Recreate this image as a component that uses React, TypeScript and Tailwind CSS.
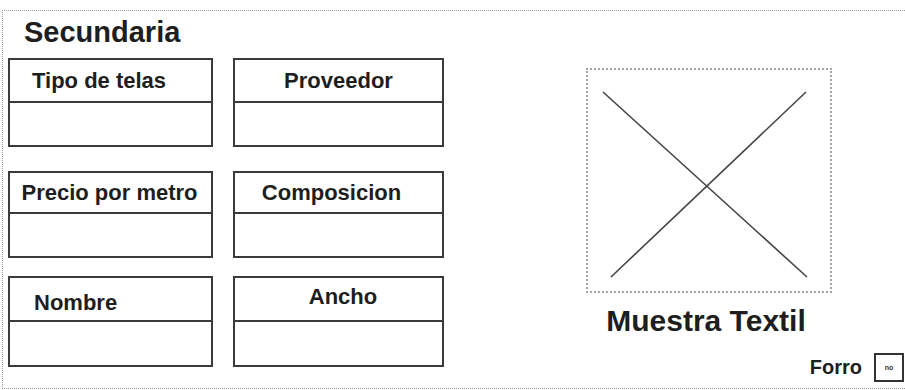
import React from "react";

type Field = {
  label: string;
  align: string;
};

// header heights differ slightly per row in the mockup
const rows: { top: string; header: string; height: string; fields: Field[] }[] = [
  {
    top: "mt-[9px]",
    header: "h-[43px]",
    height: "h-[89px]",
    fields: [
      { label: "Tipo de telas", align: "justify-start pl-[22px]" },
      { label: "Proveedor", align: "justify-center" },
    ],
  },
  {
    top: "mt-[24px]",
    header: "h-[41px]",
    height: "h-[87px]",
    fields: [
      { label: "Precio por metro", align: "justify-center pr-[2px]" },
      { label: "Composicion", align: "justify-center pr-[14px]" },
    ],
  },
  {
    top: "mt-[18px]",
    header: "h-[44px]",
    height: "h-[91px]",
    fields: [
      { label: "Nombre", align: "justify-start pl-[24px] pt-[6px]" },
      { label: "Ancho", align: "justify-center pl-[9px] pb-[6px]" },
    ],
  },
];

function FieldBox({ field, header, height, width }: { field: Field; header: string; height: string; width: string }) {
  return (
    <div className={`${width} ${height} flex flex-col border-2 border-[#3a3a3a] bg-white`}>
      <div className={`${header} ${field.align} flex items-center border-b-2 border-[#3a3a3a]`}>
        <span className="text-[22px] leading-[25px] font-bold text-[#1e1e1e]">{field.label}</span>
      </div>
      <div className="flex-1" />
    </div>
  );
}

export default function App() {
  return (
    <div className="w-[905px] h-[390px] bg-white overflow-hidden" style={{ fontFamily: '"Liberation Sans", Arial, sans-serif' }}>
      <div className="ml-[2px] mt-[10px] h-[379px] flex border border-r-0 border-dotted border-[#9a9a9a]">
        {/* form fields */}
        <div className="w-[441px] shrink-0 pl-[5px] pt-[5px]">
          <h1 className="pl-[16px] text-[29px] leading-[33px] font-bold text-[#1e1e1e]">Secundaria</h1>
          {rows.map((row) => (
            <div key={row.fields[0].label} className={`${row.top} flex gap-[20px]`}>
              <FieldBox field={row.fields[0]} header={row.header} height={row.height} width="w-[205px]" />
              <FieldBox field={row.fields[1]} header={row.header} height={row.height} width="w-[211px]" />
            </div>
          ))}
        </div>

        {/* sample preview */}
        <div className="flex-1 pl-[142px] pt-[57px]">
          <div className="w-[246px] flex flex-col items-center">
            <div className="w-[246px] h-[225px] border-2 border-dotted border-[#a5a5a5]">
              <svg width="242" height="221" viewBox="0 0 242 221">
                <line x1="15" y1="22" x2="219" y2="207" stroke="#444" strokeWidth="1.6" />
                <line x1="218" y1="22" x2="23" y2="207" stroke="#444" strokeWidth="1.6" />
              </svg>
            </div>
            <p className="mt-[11px] pr-[6px] text-[30px] leading-[34px] font-bold text-[#1e1e1e]">Muestra Textil</p>
          </div>
          <div className="mt-[15px] flex items-center justify-end gap-[12px] pr-[1px]">
            <span className="text-[20px] leading-[23px] font-bold text-[#1e1e1e]">Forro</span>
            <div className="w-[30px] h-[29px] border-2 border-[#333] flex items-center justify-center">
              <span className="text-[7px] leading-none font-bold text-[#333]">no</span>
            </div>
          </div>
        </div>
      </div>
    </div>
  );
}
